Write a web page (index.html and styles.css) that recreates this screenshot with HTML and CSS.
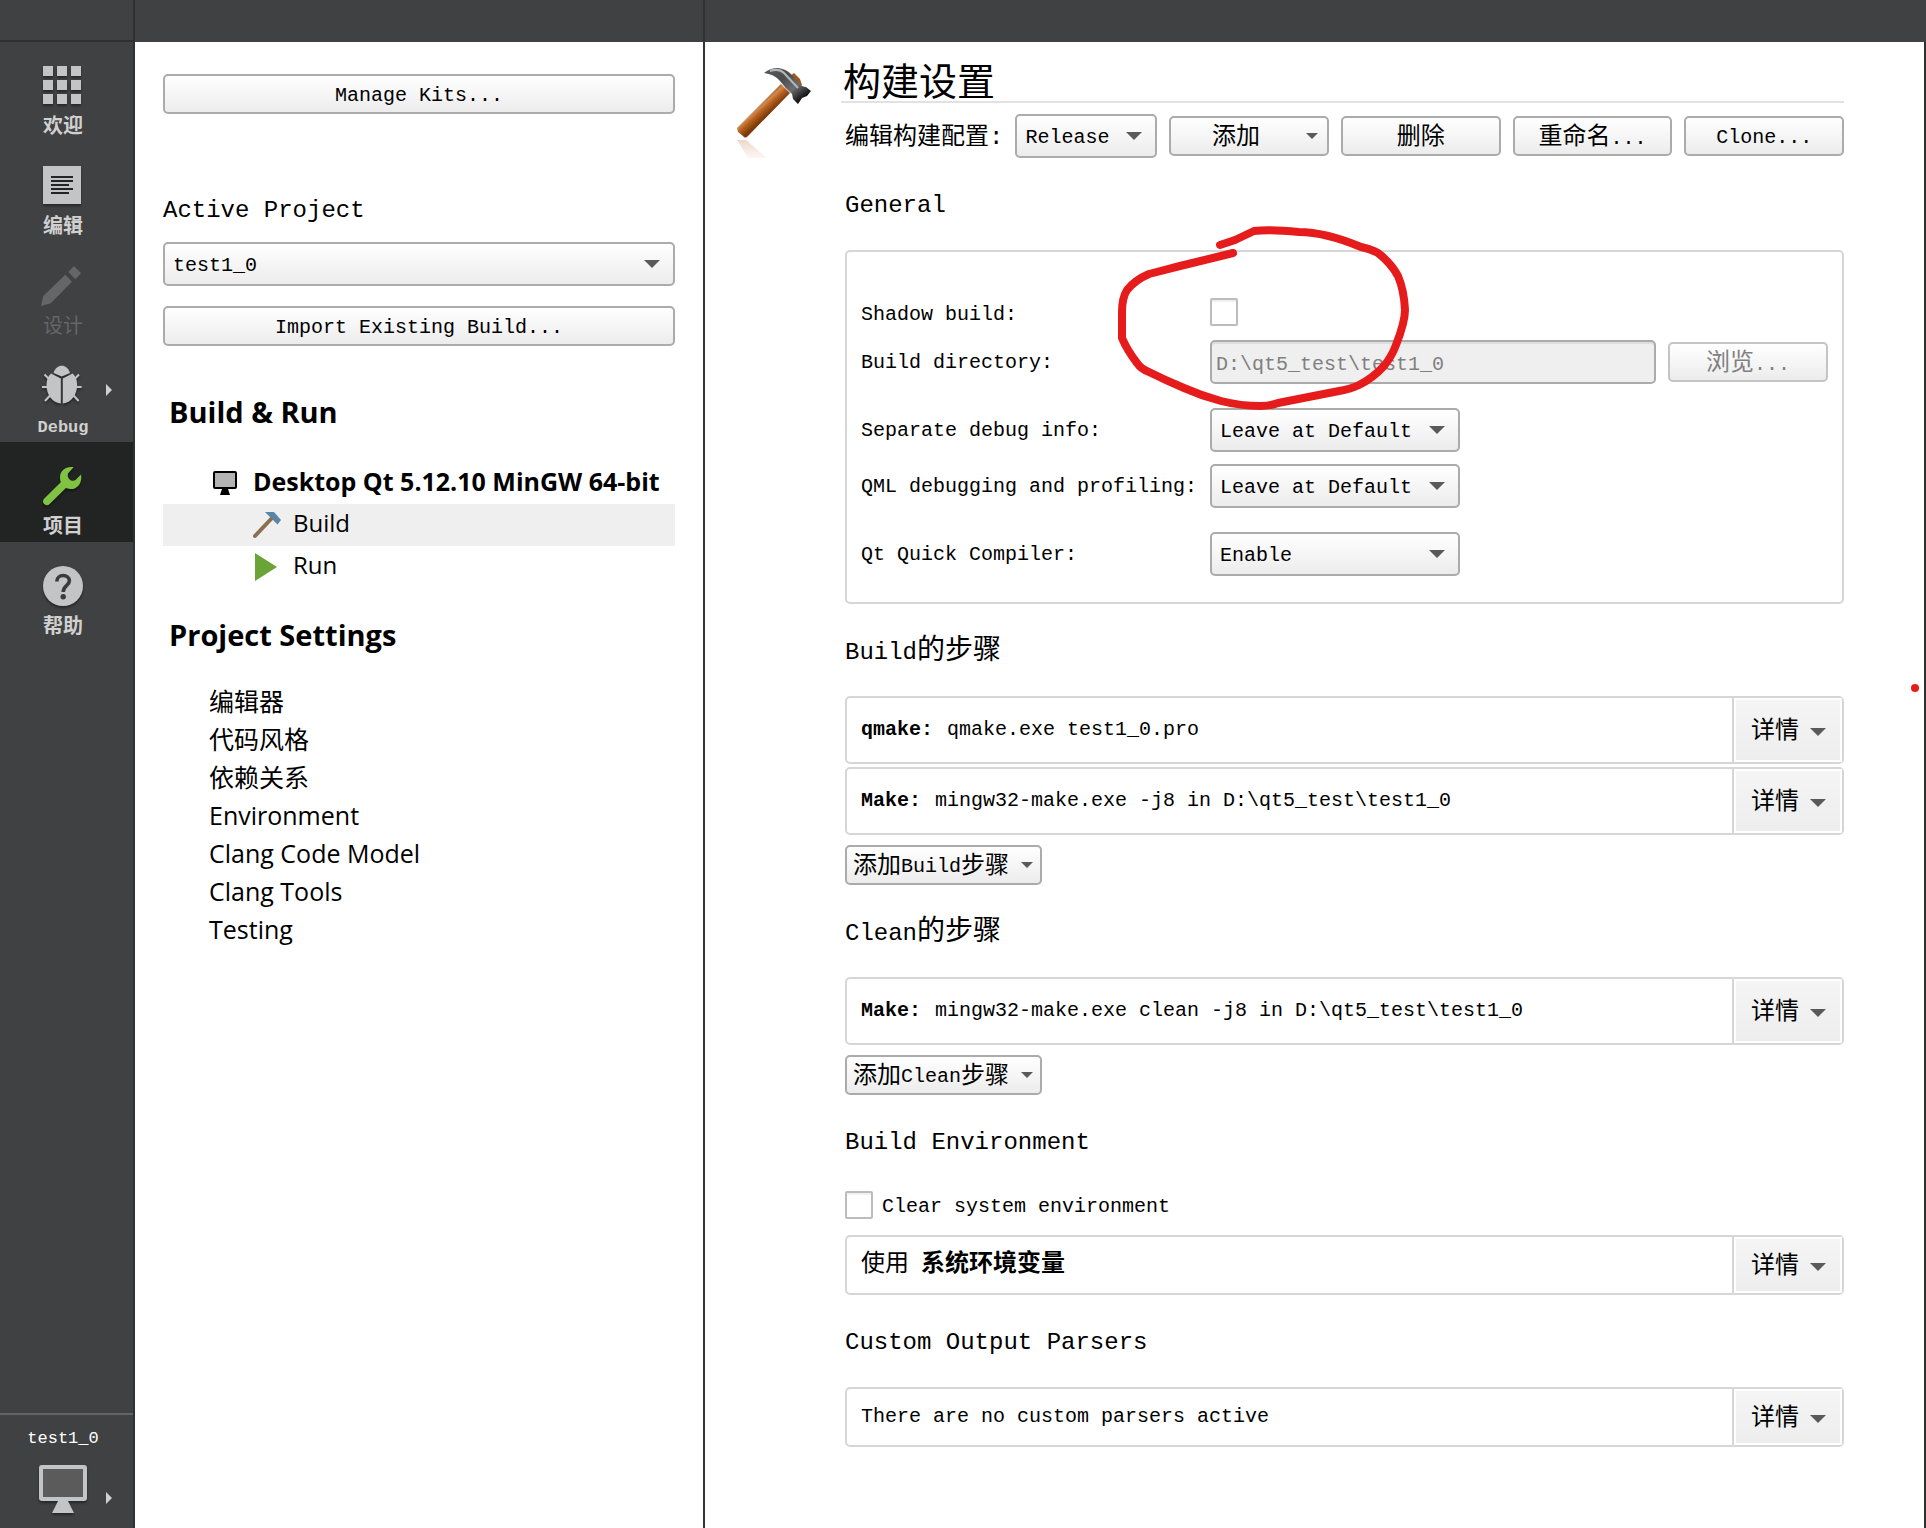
FILE: index.html
```html
<!DOCTYPE html>
<html lang="zh-CN">
<head>
<meta charset="utf-8">
<meta name="viewport" content="width=device-width, initial-scale=1">
<title>构建设置</title>
<link rel="stylesheet" href="styles.css">
</head>
<body>
<svg class="defs" width="0" height="0" aria-hidden="true">
  <defs>
    <linearGradient id="wood" gradientUnits="userSpaceOnUse" x1="21" y1="36" x2="31" y2="47">
      <stop offset="0" stop-color="#a04e17"/><stop offset="0.3" stop-color="#d08a52"/><stop offset="0.55" stop-color="#b8631f"/><stop offset="1" stop-color="#7c3a0d"/>
    </linearGradient>
    <linearGradient id="steel" x1="0" y1="0" x2="1" y2="1">
      <stop offset="0" stop-color="#5a5c5d"/><stop offset="0.35" stop-color="#4a4c4d"/><stop offset="0.6" stop-color="#6c6e6f"/><stop offset="0.85" stop-color="#0c0c0c"/>
    </linearGradient>
    <linearGradient id="fade" x1="0" y1="0" x2="0" y2="1">
      <stop offset="0" stop-color="#c98c62" stop-opacity="0.35"/><stop offset="1" stop-color="#e0b394" stop-opacity="0.12"/>
    </linearGradient>
    <symbol id="arrow" viewBox="0 0 16 8"><path d="M0 0H16L8 8Z" fill="#5a5a5a"/></symbol>
  </defs>
</svg>
<div class="app">
  <header class="topbar"><div class="topbar-modes"></div><div class="topbar-nav"></div><div class="topbar-main"></div></header>

  <nav class="modes" aria-label="模式">
    <button class="mode" type="button">
      <svg class="mode-icon" viewBox="0 0 40 40" fill="#c3c4c6"><path d="M0 1h10v10H0zM14 1h10v10H14zM28 1h10v10H28zM0 15h10v10H0zM14 15h10v10H14zM28 15h10v10H28zM0 29h10v10H0zM14 29h10v10H14zM28 29h10v10H28z"/></svg>
      <span class="mode-label">欢迎</span>
    </button>
    <button class="mode" type="button">
      <svg class="mode-icon" viewBox="0 0 40 40"><path d="M0 1h38v38H0z" fill="#c3c4c6"/><path d="M8 11h22v2H8zM8 15h22v2H8zM8 19h18v2H8zM8 23h22v2H8zM8 27h18v2H8z" fill="#232424"/></svg>
      <span class="mode-label">编辑</span>
    </button>
    <button class="mode mode-off" type="button" disabled>
      <svg class="mode-icon" viewBox="0 0 40 40" fill="#656668"><path d="M-2 41L0.3 31L22.3 9.7L29 16.7L7.7 38.3ZM31 1L38 8.3L32.3 14.3L25.3 7Z"/></svg>
      <span class="mode-label">设计</span>
    </button>
    <button class="mode" type="button">
      <svg class="mode-icon" viewBox="0 0 40 40" fill="#c3c4c6"><path d="M10.5 8C12 3 15.500 .7 18.800 .7S25.500 3 27 8L18.800 11.500Z"/><path d="M8 8.500L17.800 13.500V38.500C8.500 37.500 3.500 29 3.500 20C3.500 15 5 11 8 8.500Z"/><path d="M29.600 8.500L19.800 13.500V38.500C29 37.500 34.100 29 34.100 20C34.100 15 32.600 11 29.600 8.500Z"/><path d="M1.500 9.500L6 14M-1 22H5M2 36L7 30.500M36 9.500L31.600 14M38.600 22H33M35.600 36L30.600 30.500" stroke="#c3c4c6" stroke-width="2"/></svg>
      <span class="mode-label mode-label-latin">Debug</span>
      <svg class="mode-more" viewBox="0 0 6 12"><path d="M0 0L6 6L0 12Z" fill="#d0d0d0"/></svg>
    </button>
    <button class="mode mode-current" type="button" aria-current="page">
      <svg class="mode-icon" viewBox="0 0 40 40" fill="#80c342"><path d="M4 36.300L22 18.500" stroke="#80c342" stroke-width="7.600" stroke-linecap="round"/><path d="M30.500 2.300C24 1 17 5 17 12.500C17 20 22 24 28 24C35 24 39.500 17 38 9.500L32.500 15C29 17.500 23.500 13.500 25 8.500Z"/></svg>
      <span class="mode-label">项目</span>
    </button>
    <button class="mode" type="button">
      <svg class="mode-icon" viewBox="0 0 40 40"><circle cx="20" cy="21" r="20" fill="#c3c4c6"/><path d="M13.800 16.500C13.800 8.500 26.400 8.800 26.400 15.800C26.400 20.500 20.200 20.800 20.200 27" fill="none" stroke="#3a3b3c" stroke-width="3.600"/><circle cx="20.200" cy="31.800" r="2.700" fill="#3a3b3c"/></svg>
      <span class="mode-label">帮助</span>
    </button>
    <button class="target" type="button">
      <span class="target-name">test1_0</span>
      <svg class="target-icon" viewBox="0 0 48 48"><rect width="48" height="36" rx="3" fill="#c3c4c6"/><path d="M4 4h40v28H4z" fill="#5a5b5a"/><path d="M19 36H29L35 48H13Z" fill="#c3c4c6"/></svg>
      <svg class="mode-more" viewBox="0 0 6 12"><path d="M0 0L6 6L0 12Z" fill="#d0d0d0"/></svg>
    </button>
  </nav>

  <aside class="nav">
    <button class="btn" type="button">Manage Kits...</button>
    <label class="nav-label" for="project">Active Project</label>
    <div class="select"><select id="project"><option>test1_0</option></select><svg><use href="#arrow"/></svg></div>
    <button class="btn nav-import" type="button">Import Existing Build...</button>

    <h2 class="nav-title">Build &amp; Run</h2>
    <ul class="kits">
      <li><a class="kit" href="#kit"><svg class="kit-icon" viewBox="0 0 24 24"><rect x="1" y="1" width="22" height="16" rx="1" fill="#b3b3b3" stroke="#000" stroke-width="2"/><path d="M9 18H15L17 24H7Z"/></svg>Desktop Qt 5.12.10 MinGW 64-bit</a></li>
      <li><a class="kit-page kit-page-current" href="#build" aria-current="page"><svg class="page-icon" viewBox="0 0 28 28"><path d="M2 25L19 7" stroke="#8b6f51" stroke-width="4" stroke-linecap="round"/><path d="M12 1H21L28 9L24.500 13.500L19.500 8.500Z" fill="#5c84a6"/></svg>Build</a></li>
      <li><a class="kit-page" href="#run"><svg class="page-icon" viewBox="0 0 28 28"><path d="M2 0L24 14L2 28Z" fill="#6aa436"/></svg>Run</a></li>
    </ul>
    <h2 class="nav-title nav-title-last">Project Settings</h2>
    <ul class="settings">
      <li><a href="#editor">编辑器</a></li>
      <li><a href="#style">代码风格</a></li>
      <li><a href="#deps">依赖关系</a></li>
      <li><a href="#env">Environment</a></li>
      <li><a href="#model">Clang Code Model</a></li>
      <li><a href="#tools">Clang Tools</a></li>
      <li><a href="#testing">Testing</a></li>
    </ul>
  </aside>

  <main class="main">
    <svg class="hammer" viewBox="0 0 76 92" aria-hidden="true">
      <path d="M1 72L10 72L31 90H12Z" fill="url(#fade)"/>
      <path d="M54 8L58 5L64 11L66 17L60 18Z" fill="#a4571c"/>
      <path d="M1 60L45 16L54 25L12 68Q9 71 7 68L2 64Z" fill="url(#wood)"/>
      <path d="M28 5Q34 0 42 0Q50 1 55 6L63 15Q66 19 70 19L75 23L71 28L66 30L62 36L57 31L56 26Q49 20 44 13Q38 6 28 5Z" fill="url(#steel)"/>
      <path d="M34 3Q43 0 48 5L62 20" fill="none" stroke="#b4b6b7" stroke-width="2"/>
    </svg>
    <div class="content">
      <h1 class="title">构建设置</h1>
      <div class="sections">
        <div class="config">
          <label class="zh" for="config">编辑构建配置:</label>
          <div class="select config-select"><select id="config"><option>Release</option></select><svg><use href="#arrow"/></svg></div>
          <button class="btn btn-menu" type="button"><span class="zh">添加</span><svg><use href="#arrow"/></svg></button>
          <button class="btn" type="button"><span class="zh">删除</span></button>
          <button class="btn" type="button"><span class="zh">重命名</span>...</button>
          <button class="btn" type="button">Clone...</button>
        </div>

        <h2 class="heading">General</h2>
        <section class="general">
          <div class="row row-check"><label for="shadow">Shadow build:</label><input class="check" id="shadow" type="checkbox"></div>
          <div class="row row-apart"><label for="dir">Build directory:</label><input class="path" id="dir" type="text" value="D:\qt5_test\test1_0" disabled><button class="btn" type="button" disabled><span class="zh">浏览</span>...</button></div>
          <div class="row"><label for="debuginfo">Separate debug info:</label><div class="select"><select id="debuginfo"><option>Leave at Default</option></select><svg><use href="#arrow"/></svg></div></div>
          <div class="row row-apart"><label for="qml">QML debugging and profiling:</label><div class="select"><select id="qml"><option>Leave at Default</option></select><svg><use href="#arrow"/></svg></div></div>
          <div class="row"><label for="quick">Qt Quick Compiler:</label><div class="select"><select id="quick"><option>Enable</option></select><svg><use href="#arrow"/></svg></div></div>
          <svg class="scribble" viewBox="1115 222 300 190" aria-hidden="true"><path d="M1234 253L1181 266L1150 274Q1136 280 1128 290Q1123 298 1123 312V338Q1128 350 1138 363Q1142 369 1150 372Q1166 380 1185 388Q1203 396 1222 401Q1242 406 1261 406Q1271 406 1279 403L1340 391Q1352 389 1360 385Q1374 378 1385 366Q1393 356 1397 345Q1406 322 1406 310Q1405 290 1399 276Q1392 263 1379 253Q1372 249 1362 247Q1326 232 1300 232Q1270 229 1255 231L1236 240L1221 245" fill="none" stroke="#e61c1c" stroke-width="8" stroke-linecap="round" stroke-linejoin="round"/></svg>
        </section>

        <h2 class="heading">Build<span class="zh">的步骤</span></h2>
        <div class="steps">
          <div class="panel"><p><b>qmake:</b> qmake.exe test1_0.pro</p><button class="details" type="button">详情<svg><use href="#arrow"/></svg></button></div>
          <div class="panel"><p><b>Make:</b> mingw32-make.exe -j8 in D:\qt5_test\test1_0</p><button class="details" type="button">详情<svg><use href="#arrow"/></svg></button></div>
        </div>
        <button class="btn add-step" type="button"><span class="zh">添加</span>Build<span class="zh">步骤</span><svg><use href="#arrow"/></svg></button>

        <h2 class="heading">Clean<span class="zh">的步骤</span></h2>
        <div class="steps">
          <div class="panel"><p><b>Make:</b> mingw32-make.exe clean -j8 in D:\qt5_test\test1_0</p><button class="details" type="button">详情<svg><use href="#arrow"/></svg></button></div>
        </div>
        <button class="btn add-step" type="button"><span class="zh">添加</span>Clean<span class="zh">步骤</span><svg><use href="#arrow"/></svg></button>

        <h2 class="heading">Build Environment</h2>
        <div class="clear"><input class="check" id="clear" type="checkbox"><label for="clear">Clear system environment</label></div>
        <div class="panel panel-short"><p><span class="zh">使用</span> <b class="zh">系统环境变量</b></p><button class="details" type="button">详情<svg><use href="#arrow"/></svg></button></div>

        <h2 class="heading">Custom Output Parsers</h2>
        <div class="panel panel-short"><p>There are no custom parsers active</p><button class="details" type="button">详情<svg><use href="#arrow"/></svg></button></div>
      </div>
    </div>
    <span class="dot"></span>
  </main>
</div>
</body>
</html>
```
FILE: styles.css
```css
* { box-sizing: border-box; }

body {
  margin: 0;
  background: #fff;
  color: #000;
  font: 20px/28px "Liberation Mono", "Noto Sans CJK SC", monospace;
}

h1, h2, p, ul { margin: 0; padding: 0; font-weight: 400; }
ul { list-style: none; }
a { color: inherit; text-decoration: none; }
button, select, input { margin: 0; font: inherit; color: inherit; }
.defs { position: absolute; }
.zh { font-size: 24px; }

.app {
  display: grid;
  grid-template-columns: 135px 570px minmax(0, 1fr);
  grid-template-rows: 42px 1fr;
  min-height: 100vh;
}

/* Top strip */
.topbar { grid-column: 1 / -1; display: grid; grid-template-columns: subgrid; background: #404142; }
.topbar-modes { border-right: 2px solid #2f3031; border-bottom: 2px solid #2f3031; }
.topbar-nav { border-right: 2px solid #2f3031; }

/* Mode selector */
.modes { display: flex; flex-direction: column; background: #404142; border-right: 2px solid #2f3031; }
.mode, .target {
  position: relative;
  display: flex;
  flex-direction: column;
  align-items: center;
  border: 0;
  background: none;
  color: #d0d0d0;
}
.mode { height: 100px; padding: 23px 7px 0 0; gap: 11px; }
.mode-current { background: #222423; }
.mode-icon { width: 40px; height: 40px; overflow: visible; filter: drop-shadow(0 2px 1px rgba(0, 0, 0, .4)); }
.mode-off .mode-icon { filter: none; }
.mode-label { font-size: 20px; line-height: 24px; font-weight: 700; }
.mode-label-latin { font-size: 17px; }
.mode-off .mode-label { color: #656668; font-weight: 400; }
.mode-more { position: absolute; right: 21px; bottom: 46px; width: 6px; height: 12px; }
.target { margin-top: auto; padding: 12px 7px 15px 0; gap: 14px; border-top: 2px solid #626364; color: #fff; }
.target-name { font-size: 17px; line-height: 24px; }
.target-icon { width: 48px; height: 48px; filter: drop-shadow(0 2px 1px rgba(0, 0, 0, .4)); }
.target .mode-more { bottom: 24px; }

/* Controls */
.btn {
  height: 40px;
  padding: 4px 0 0;
  border: 2px solid #ababab;
  border-radius: 5px;
  background: linear-gradient(#fff, #ececec);
  line-height: 32px;
}
.btn:disabled { border-color: #c4c4c4; color: #808080; }
.select { display: grid; align-items: center; }
.select select, .select svg { grid-area: 1 / 1; }
.select select {
  appearance: none;
  width: 100%;
  height: 44px;
  padding: 4px 8px 0;
  border: 2px solid #ababab;
  border-radius: 5px;
  background: linear-gradient(#fff, #ececec);
}
.select svg { justify-self: end; width: 16px; height: 8px; margin-right: 15px; pointer-events: none; }
.check {
  appearance: none;
  width: 28px;
  height: 28px;
  border: 2px solid #bcbcbc;
  border-radius: 2px;
  background: #fff;
  box-shadow: inset 0 2px 1px #f0f0f0;
}

/* Project panel */
.nav {
  display: flex;
  flex-direction: column;
  padding: 32px 28px 0;
  border-right: 2px solid #333435;
}
.nav-label { margin: 81px 0 15px; font-size: 24px; line-height: 32px; }
.nav-import { margin-top: 20px; }
.nav-title, .kits, .settings { font-family: "Open Sans", "Noto Sans CJK SC", sans-serif; }
.nav-title { margin: 48px 0 32px; padding-left: 6px; font-size: 29px; line-height: 36px; font-weight: 700; }
.nav-title-last { margin: 29px 0; }
.kits { font-size: 24px; line-height: 38px; }
.kit, .kit-page { display: flex; align-items: center; gap: 12px; padding-bottom: 4px; white-space: nowrap; }
.kits svg { margin-top: 3px; }
.kit { padding-left: 50px; gap: 16px; font-size: 25px; font-weight: 700; }
.kit-icon { width: 24px; height: 24px; }
.kit-page { padding-left: 90px; }
.kit-page-current { background: #efefef; }
.page-icon { width: 28px; height: 28px; }
.settings { padding-left: 46px; font-size: 25px; line-height: 38px; }

/* Build settings page */
.main {
  position: relative;
  display: grid;
  grid-template-columns: 76px minmax(0, 1fr);
  gap: 29px;
  align-items: start;
  padding: 19px 80px 40px 31px;
  border-right: 2px solid #2f3031;
}
.hammer { width: 76px; height: 92px; margin-top: 7px; }
.title { padding: 8px 0 0 2px; border-bottom: 2px solid #e2e2e2; font-size: 38px; line-height: 32px; }
.sections { padding-left: 4px; }
.config { display: flex; align-items: center; gap: 12px; margin-top: 11px; }
.config label { flex: 1; padding-top: 4px; white-space: nowrap; }
.config .btn { width: 160px; }
.config-select { width: 142px; }
.btn-menu { display: grid; align-items: center; }
.btn-menu > * { grid-area: 1 / 1; }
.btn-menu .zh { padding-right: 26px; }
.btn-menu svg { justify-self: end; width: 12px; height: 6px; margin: 0 9px 4px 0; }

.heading { height: 92px; padding-top: 30px; font-size: 24px; line-height: 36px; }
.heading .zh { font-size: 28px; }

.general {
  position: relative;
  padding: 46px 14px 26px;
  border: 2px solid #d6d6d6;
  border-radius: 5px;
}
.row { display: flex; align-items: center; margin-bottom: 12px; }
.row:last-of-type { margin-bottom: 0; }
.row-check { margin-bottom: 14px; }
.row-apart { margin-bottom: 24px; }
.row label { width: 349px; padding-top: 2px; }
.row-check { height: 28px; }
.row-check label { padding-top: 6px; }
.row .select { width: 250px; }
.row .btn { width: 160px; margin-left: 12px; }
.path {
  flex: 1;
  min-width: 0;
  height: 44px;
  padding: 4px 4px 0;
  border: 2px solid #ababab;
  border-radius: 5px;
  background: #efefef;
  color: #808080;
  box-shadow: inset 0 2px 0 #dedede;
}
.scribble { position: absolute; left: 267px; top: -30px; width: 300px; height: 190px; pointer-events: none; }

.steps { display: grid; gap: 3px; margin-bottom: 10px; }
.panel {
  display: flex;
  height: 68px;
  border: 2px solid #d6d6d6;
  border-radius: 5px;
  align-items: center;
}
.panel-short { height: 60px; }
.panel p { flex: 1; padding-left: 14px; }
.panel b { margin-right: 2px; }
.details {
  display: flex;
  align-items: center;
  align-self: stretch;
  gap: 11px;
  width: 110px;
  padding: 4px 0 0 17px;
  border: 0;
  border-left: 2px solid #d6d6d6;
  background: linear-gradient(#f5f5f5, #ededed);
  box-shadow: inset 0 0 0 2px #fff;
  font-size: 24px;
}
.details svg { width: 16px; height: 8px; }
.add-step { display: flex; align-items: center; padding: 4px 7px 0 6px; }
.add-step svg { width: 12px; height: 6px; margin: 0 0 4px 12px; }
.clear { display: flex; align-items: center; gap: 9px; height: 28px; margin: 4px 0 16px; }
.clear label { padding-top: 4px; }

.dot { position: absolute; right: 5px; top: 642px; width: 8px; height: 8px; border-radius: 50%; background: #e61c1c; }
```
